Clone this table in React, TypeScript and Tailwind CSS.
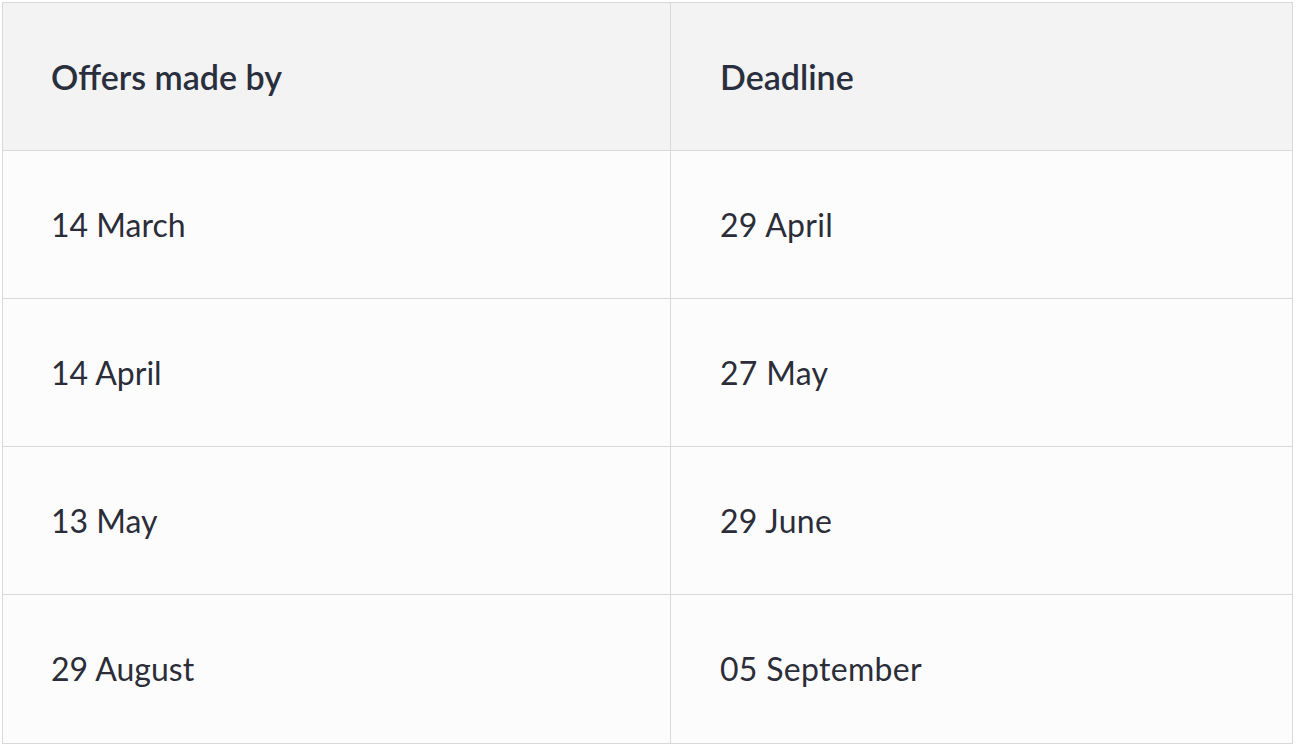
const rows: [string, string][] = [
  ['14 March', '29 April'],
  ['14 April', '27 May'],
  ['13 May', '29 June'],
  ['29 August', '05 September'],
];

export default function App() {
  return (
    <div className="w-[1296px] h-[746px] bg-white pl-[2px] pt-[2px]" style={{ fontFamily: 'Lato, sans-serif' }}>
      <div className="w-[1291px] border border-[#d9d9dc] grid grid-cols-[668px_1fr]">
        <div className="h-[148px] bg-[#f3f3f4] flex items-center pl-[48px] border-r border-b border-[#d9d9dc] text-[34px] font-semibold text-[#2a2f3d]">
          Offers made by
        </div>
        <div className="h-[148px] bg-[#f3f3f4] flex items-center pl-[49px] border-b border-[#d9d9dc] text-[34px] font-semibold text-[#2a2f3d]">
          Deadline
        </div>
        {rows.map(([a, b], i) => (
          <div key={i} className="contents">
            <div className={`h-[148px] bg-[#fcfcfd] flex items-center pl-[48px] border-r border-[#d9d9dc] text-[32px] text-[#2b2d38] ${i < rows.length - 1 ? 'border-b' : ''}`}>
              {a}
            </div>
            <div className={`h-[148px] bg-[#fcfcfd] flex items-center pl-[49px] border-[#d9d9dc] text-[32px] text-[#2b2d38] tracking-[0.3px] ${i < rows.length - 1 ? 'border-b' : ''}`}>
              {b}
            </div>
          </div>
        ))}
      </div>
    </div>
  );
}
